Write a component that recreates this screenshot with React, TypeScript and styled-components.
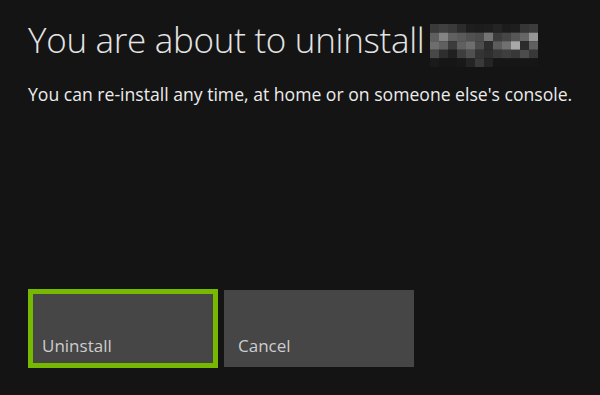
import React from "react";
import styled, { createGlobalStyle } from "styled-components";

const GlobalStyle = createGlobalStyle`
  html, body {
    margin: 0;
    padding: 0;
    background: #141414;
  }
`;

const Page = styled.div`
  display: flex;
  flex-direction: column;
  box-sizing: border-box;
  width: 600px;
  height: 395px;
  padding: 18px 0 27px 28px;
  background: #141414;
  font-family: "Open Sans", "Noto Sans", sans-serif;
  color: #e6e6e6;
  overflow: hidden;
`;

const TitleRow = styled.div`
  display: flex;
  align-items: flex-start;
  gap: 6px;
`;

const Title = styled.h1`
  margin: 0;
  font-size: 35px;
  font-weight: 300;
  line-height: 44px;
  color: #e4e4e4;
  letter-spacing: -0.3px;
`;

const Blur = styled.svg`
  display: block;
  margin-top: 6px;
  flex: none;
`;

const Subtitle = styled.p`
  margin: 16px 0 0;
  font-size: 17.6px;
  line-height: 22px;
  color: #ececec;
`;

const ButtonRow = styled.div`
  display: flex;
  align-items: center;
  gap: 6px;
  margin-top: auto;
`;

const Button = styled.button<{ $focused?: boolean }>`
  display: flex;
  align-items: flex-end;
  box-sizing: border-box;
  width: 190px;
  height: ${(p) => (p.$focused ? "79px" : "77px")};
  margin: 0;
  padding: 0 0 ${(p) => (p.$focused ? "6px" : "10px")}
    ${(p) => (p.$focused ? "9px" : "14px")};
  border: ${(p) => (p.$focused ? "5px solid #76b900" : "none")};
  background: #464646;
  color: #cdcdcd;
  font-family: "Open Sans", "Noto Sans", sans-serif;
  font-size: 17px;
  line-height: 22px;
  text-align: left;
  cursor: pointer;
`;

// pixelated (censored) game name
const cells = [
  [58, 64, 58, 44, 30, 28, 30, 36, 28, 30, 54, 60],
  [95, 132, 96, 90, 80, 76, 116, 60, 70, 86, 102, 150],
  [110, 96, 60, 96, 110, 76, 46, 92, 112, 168, 44, 96],
  [72, 46, 32, 62, 80, 52, 46, 56, 62, 56, 76, 56],
  [26, 22, 22, 24, 36, 62, 36, 22, 22, 22, 22, 22],
];

const Pixelated = () => (
  <Blur width="108" height="43" viewBox="0 0 108 43">
    {cells.map((row, r) =>
      row.map((v, c) => (
        <rect
          key={`${r}-${c}`}
          x={c * 9}
          y={r * 8.6}
          width="9"
          height="8.6"
          fill={`rgb(${v},${v},${v})`}
        />
      ))
    )}
    <rect x="45" y="35" width="9" height="8" fill="rgb(58,58,58)" />
  </Blur>
);

export default function App() {
  return (
    <>
      <GlobalStyle />
      <Page>
        <TitleRow>
          <Title>You are about to uninstall</Title>
          <Pixelated />
        </TitleRow>
        <Subtitle>
          You can re-install any time, at home or on someone else's console.
        </Subtitle>
        <ButtonRow>
          <Button $focused>Uninstall</Button>
          <Button>Cancel</Button>
        </ButtonRow>
      </Page>
    </>
  );
}
